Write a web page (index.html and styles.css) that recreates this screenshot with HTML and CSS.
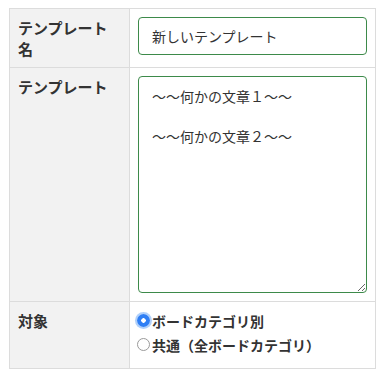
FILE: index.html
```html
<!DOCTYPE html>
<html lang="ja">
<head>
<meta charset="utf-8">
<title>テンプレート</title>
<link rel="stylesheet" href="styles.css">
</head>
<body>
<table class="form-table">
  <tr>
    <th class="label">テンプレート名</th>
    <td class="value"><input class="text-input" type="text" value="新しいテンプレート"></td>
  </tr>
  <tr>
    <th class="label">テンプレート</th>
    <td class="value"><textarea class="text-area">～～何かの文章１～～

～～何かの文章２～～</textarea></td>
  </tr>
  <tr>
    <th class="label">対象</th>
    <td class="value">
      <div class="radio-group">
        <label class="radio-line"><span class="radio checked"></span>ボードカテゴリ別</label>
        <label class="radio-line"><span class="radio"></span>共通（全ボードカテゴリ）</label>
      </div>
    </td>
  </tr>
</table>
</body>
</html>
```
FILE: styles.css
```css
html, body {
  margin: 0;
  padding: 0;
  background: #fff;
}
body {
  padding: 8px 0 0 9px;
  font-family: "Noto Sans CJK JP", "Noto Sans", sans-serif;
  color: #333;
}
.form-table {
  border-spacing: 0;
  table-layout: fixed;
  width: 367px;
  border-top: 1px solid #dcdcdc;
  border-left: 1px solid #dcdcdc;
}
.form-table th,
.form-table td {
  border-right: 1px solid #dcdcdc;
  border-bottom: 1px solid #dcdcdc;
  padding: 8px;
  vertical-align: top;
  box-sizing: border-box;
}
.label {
  width: 120px;
  background: #f2f2f2;
  text-align: left;
  font-size: 15px;
  line-height: 21px;
  font-weight: bold;
  color: #333;
}
.value {
  width: 246px;
  background: #fff;
}
.text-input,
.text-area {
  display: block;
  box-sizing: border-box;
  width: 100%;
  margin: 0;
  border: 1px solid #3d8a4a;
  border-radius: 4px;
  font-family: "Noto Sans CJK JP", "Noto Sans", sans-serif;
  font-size: 14px;
  color: #333;
  background: #fff;
  outline: none;
}
.text-input {
  height: 38px;
  padding: 0 13px;
}
.text-area {
  height: 217px;
  padding: 9px 13px;
  line-height: 20px;
  resize: vertical;
}
.radio-group {
  display: flex;
  flex-direction: column;
  gap: 3px;
  padding-bottom: 5px;
}
.radio-line {
  display: flex;
  align-items: center;
  height: 21px;
  font-size: 14px;
  font-weight: bold;
  color: #333;
}
.radio {
  box-sizing: border-box;
  width: 13px;
  height: 13px;
  margin: 0 2px 0 -1px;
  border: 1px solid #9a9a9a;
  border-radius: 50%;
  background: #fff;
  flex: none;
}
.radio.checked {
  border: none;
  background: radial-gradient(circle, #fff 0 2px, #2f7ff5 2.5px);
  box-shadow: 0 0 0 2px rgba(80, 150, 245, 0.45);
}
```
